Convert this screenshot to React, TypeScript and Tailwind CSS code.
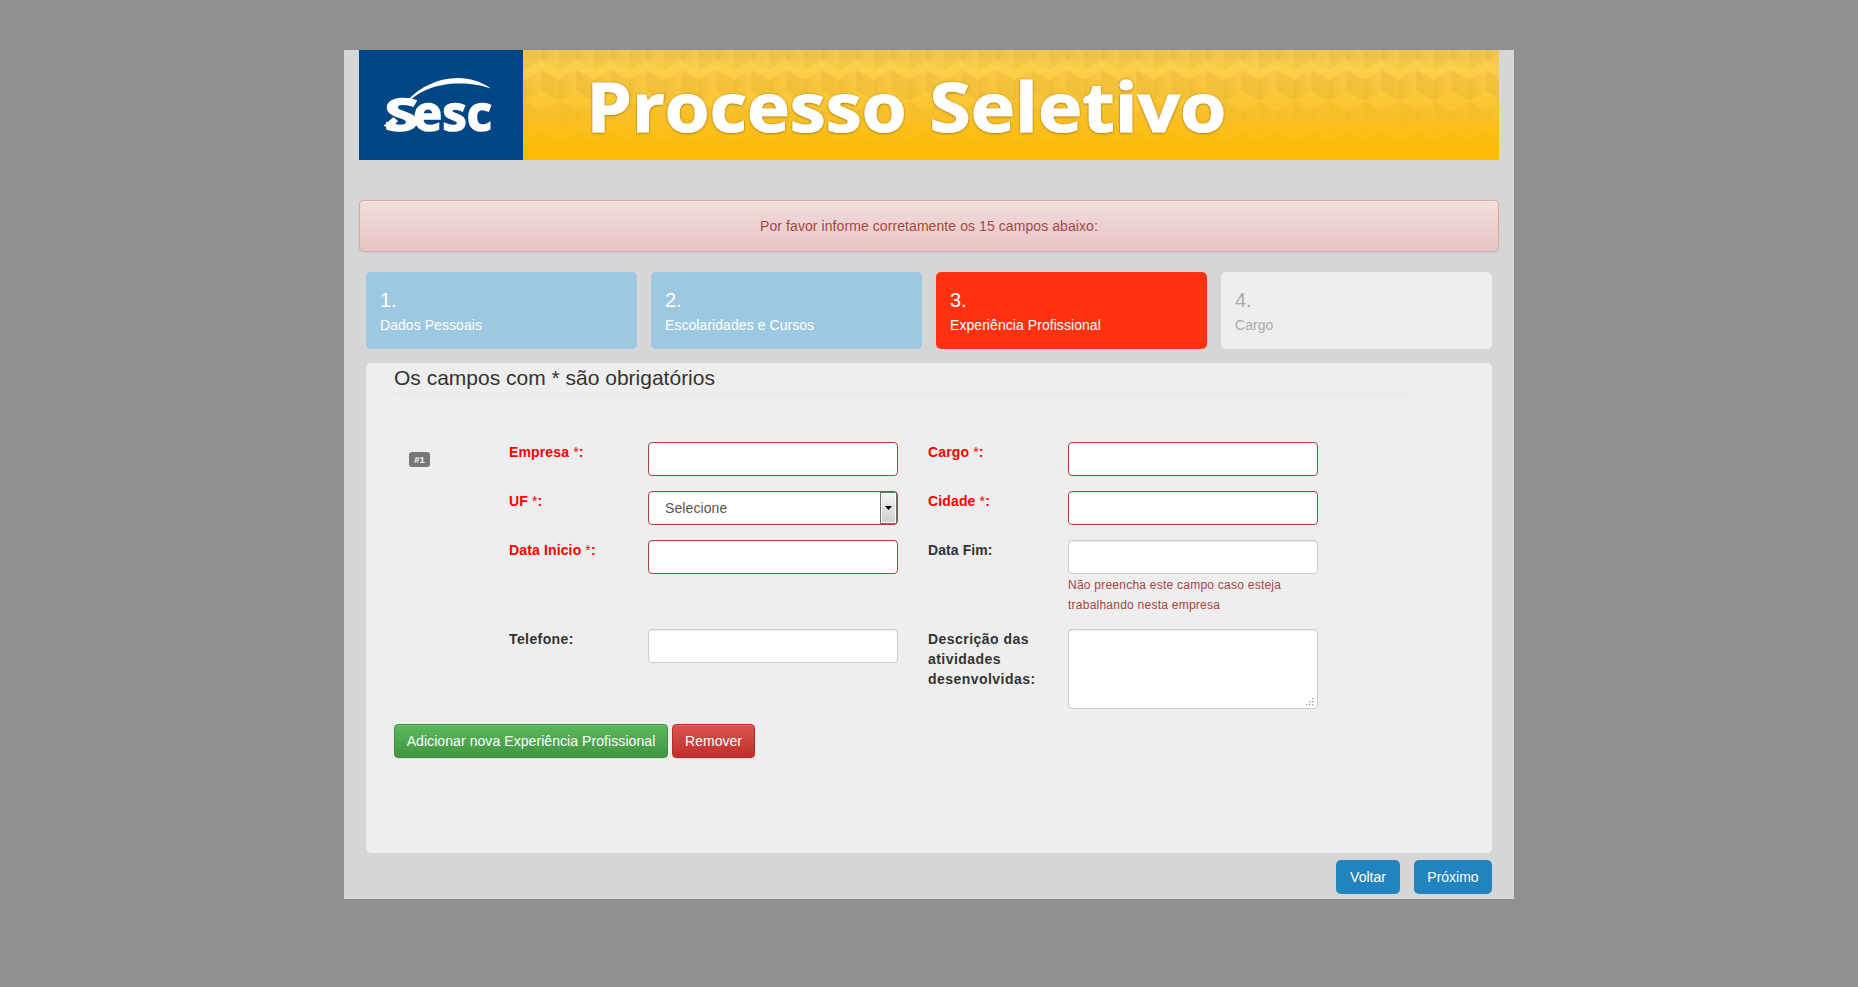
import React from "react";

function Banner() {
  return (
    <header className="h-[110px] shrink-0">
      <svg width="1140" height="110" viewBox="359 50 1140 110" className="block">
        <defs>
          <linearGradient id="gold" x1="0" y1="0" x2="0" y2="1">
            <stop offset="0" stopColor="#f8cc55" />
            <stop offset="0.2" stopColor="#fdce4a" />
            <stop offset="0.6" stopColor="#fcc328" />
            <stop offset="0.9" stopColor="#fcbb07" />
            <stop offset="1" stopColor="#fdba00" />
          </linearGradient>
          <linearGradient id="fadeDown" x1="0" y1="0" x2="0" y2="1">
            <stop offset="0" stopColor="#fff" stopOpacity="0.75" />
            <stop offset="0.4" stopColor="#fff" stopOpacity="0.65" />
            <stop offset="0.65" stopColor="#fff" stopOpacity="0.3" />
            <stop offset="0.9" stopColor="#fff" stopOpacity="0" />
          </linearGradient>
          <linearGradient id="faceLeft" x1="0" y1="0" x2="1" y2="0">
            <stop offset="0" stopColor="#cfa02a" stopOpacity="0.38" />
            <stop offset="1" stopColor="#cfa02a" stopOpacity="0.26" />
          </linearGradient>
          <linearGradient id="faceRight" x1="0" y1="0" x2="1" y2="0">
            <stop offset="0" stopColor="#cfa02a" stopOpacity="0.5" />
            <stop offset="0.35" stopColor="#cfa02a" stopOpacity="0.24" />
            <stop offset="1" stopColor="#cfa02a" stopOpacity="0.1" />
          </linearGradient>
          <pattern id="cubes" patternUnits="userSpaceOnUse" x="541.500" y="60" width="35" height="62">
            <path d="M0 10 17.5 20V41L0 31Z" fill="url(#faceLeft)" />
            <path d="M17.5 20 35 10V31L17.5 41Z" fill="url(#faceRight)" />
            <path d="M17.5 41 35 51V62H17.5Z" fill="url(#faceLeft)" />
            <path d="M0 51 17.5 41V62H0Z" fill="url(#faceRight)" />
            <path d="M17.5 0V10L0 0Z" fill="url(#faceRight)" opacity="0.6" />
            <path d="M17.5 0H35L17.5 10Z" fill="url(#faceLeft)" opacity="0.6" />
          </pattern>
          <mask id="cubeMask">
            <rect x="523" y="50" width="976" height="110" fill="url(#fadeDown)" />
          </mask>
          <filter id="titleShadow" x="-5%" y="-20%" width="110%" height="140%">
            <feDropShadow dx="0" dy="0.5" stdDeviation="1.3" floodColor="#7a5600" floodOpacity="0.85" />
          </filter>
        </defs>
        <rect x="523" y="50" width="976" height="110" fill="url(#gold)" />
        <rect x="523" y="50" width="976" height="110" fill="url(#cubes)" mask="url(#cubeMask)" />
        <rect x="359" y="50" width="164" height="110" fill="#004684" />
        <path d="M406 105C417 91 437 83.500 459 83.500C472 83.500 482 85.500 491 88.500C481 81.500 470 78 458 78C438 78 420 87 408 100L404 104Z" fill="#fff" />
        <path d="M383.500 125.800 393.500 117 398 121 391 129Z" fill="#fff" />
        <text fontFamily="'Open Sans', sans-serif" fontWeight="700" fill="#fff" stroke="#fff" strokeWidth="1.500">
          <tspan x="384.500" y="131" fontSize="45" textLength="34" lengthAdjust="spacingAndGlyphs">S</tspan>
          <tspan x="413" y="130.500" fontSize="51" textLength="79" lengthAdjust="spacingAndGlyphs">esc</tspan>
        </text>
        <g
          filter="url(#titleShadow)"
          fill="#fff"
          stroke="#fff"
          strokeWidth="1"
          fontFamily="'Open Sans', sans-serif"
          fontWeight="700"
          fontSize="69"
        >
          <text x="586.500" y="132" textLength="320" lengthAdjust="spacingAndGlyphs" fontSize="68">Processo</text>
          <text x="929.500" y="132" textLength="297" lengthAdjust="spacingAndGlyphs" fontSize="68">Seletivo</text>
        </g>
      </svg>
    </header>
  );
}

const STEPS = [
  { n: "1.", title: "Dados Pessoais", style: "bg-[#9dc8e2] text-white" },
  { n: "2.", title: "Escolaridades e Cursos", style: "bg-[#9dc8e2] text-white" },
  { n: "3.", title: "Experiência Profissional", style: "bg-[#ff3111] text-white" },
  { n: "4.", title: "Cargo", style: "bg-[#eeeeee] text-[#aaaaaa]" },
];

const control =
  "block w-[250px] rounded-[4px] border bg-white shadow-[inset_0_1px_1px_rgba(0,0,0,0.075)] outline-none";

function Label({ text, required = false, spacing = "" }: { text: string; required?: boolean; spacing?: string }) {
  return (
    <label className={required ? "font-bold tracking-[0.14px] text-[#ff0000]" : `font-bold text-[#333333] ${spacing}`}>
      {text}
      {required && <span className="font-normal"> *</span>}:
    </label>
  );
}

function Input({ error = false }: { error?: boolean }) {
  return <input type="text" className={`${control} h-[34px] ${error ? "border-[#a94442]" : "border-[#cccccc]"}`} />;
}

function Select() {
  return (
    <div className={`${control} flex h-[34px] justify-between border-[#a94442] pl-4 text-[#555555]`}>
      <span className="leading-8 tracking-[0.1px]">Selecione</span>
      <span className="flex w-[17px] items-center justify-center border border-[#707070] bg-linear-to-b from-[#f4f4f4] to-[#cfcfcf] shadow-[inset_0_0_0_1px_#fcfcfc]">
        <svg width="7" height="4" viewBox="0 0 7 4">
          <path d="M0 0H7L3.500 4Z" fill="#000" />
        </svg>
      </span>
    </div>
  );
}

const GRIP = [[6, 0], [3, 3], [6, 3], [0, 6], [3, 6], [6, 6]];

export default function App() {
  return (
    <div className="flex h-[987px] justify-center bg-[#909090] pt-[50px] font-['Liberation_Sans',Arial,sans-serif] text-sm leading-5 text-[#333333]">
      <main className="flex h-[849px] w-[1170px] flex-col bg-[#d6d6d6] px-[15px]">
        <Banner />
        <div className="mt-10 flex h-[52px] shrink-0 items-center justify-center rounded-[4px] border border-[#dca7a7] bg-linear-to-b from-[#f2dede] to-[#e7c3c3] tracking-[0.08px] text-[#a94442] shadow-[inset_0_1px_0_rgba(255,255,255,0.25),0_1px_2px_rgba(0,0,0,0.05)] [text-shadow:0_1px_0_rgba(255,255,255,0.2)]">
          Por favor informe corretamente os 15 campos abaixo:
        </div>
        <ol className="mx-[7px] mt-5 grid shrink-0 grid-cols-4 gap-[14px]">
          {STEPS.map((s) => (
            <li key={s.n} className={`h-[77px] rounded-[5px] px-[14px] pt-[17px] ${s.style}`}>
              <div className="text-xl leading-[22px]">{s.n}</div>
              <div className="pt-[4px] tracking-[0.06px]">{s.title}</div>
            </li>
          ))}
        </ol>
        <section className="mx-[7px] mt-[14px] h-[490px] shrink-0 rounded-[5px] bg-[#eeeeee] px-7">
          <h1 className="h-[31px] w-[1015px] border-b border-[#e5e5e5] text-[21px] leading-[30px]">
            Os campos com * são obrigatórios
          </h1>
          <div className="mt-12 flex pl-[15px]">
            <div className="w-[100px] pt-[10px]">
              <span className="flex h-[15px] w-[21px] items-center justify-center rounded-[3px] bg-[#777777] text-[9.500px] font-bold text-white">
                #1
              </span>
            </div>
            <div className="grid grid-cols-[139px_280px_140px_250px] gap-y-[15px]">
              <Label text="Empresa" required />
              <Input error />
              <Label text="Cargo" required />
              <Input error />
              <Label text="UF" required />
              <Select />
              <Label text="Cidade" required />
              <Input error />
              <Label text="Data Inicio" required />
              <Input error />
              <Label text="Data Fim" spacing="tracking-[0.08px]" />
              <div>
                <Input />
                <p className="pt-px text-xs leading-5 tracking-[0.24px] text-[#a94442] -mb-px">
                  Não preencha este campo caso esteja
                  <br />
                  trabalhando nesta empresa
                </p>
              </div>
              <Label text="Telefone" spacing="tracking-[0.4px]" />
              <Input />
              <Label text="Descrição das atividades desenvolvidas" spacing="tracking-[0.46px]" />
              <div className={`${control} flex h-[80px] items-end justify-end border-[#cccccc] pr-[3px] pb-[2px]`}>
                <svg width="8" height="8" viewBox="0 0 8 8" fill="#aaa">
                  {GRIP.map(([x, y]) => (
                    <rect key={`${x}-${y}`} x={x} y={y} width="1.500" height="1.500" />
                  ))}
                </svg>
              </div>
            </div>
          </div>
          <div className="mt-[15px] flex gap-1 text-white [text-shadow:0_-1px_0_rgba(0,0,0,0.2)]">
            <button className="h-[34px] w-[274px] rounded-[4px] border border-[#3e8f3e] bg-linear-to-b from-[#5cb85c] to-[#419641] tracking-[0.07px] whitespace-nowrap shadow-[inset_0_1px_0_rgba(255,255,255,0.15),0_1px_1px_rgba(0,0,0,0.075)]">
              Adicionar nova Experiência Profissional
            </button>
            <button className="h-[34px] w-[83px] rounded-[4px] border border-[#b92c28] bg-linear-to-b from-[#d9534f] to-[#c12e2a] shadow-[inset_0_1px_0_rgba(255,255,255,0.15),0_1px_1px_rgba(0,0,0,0.075)]">
              Remover
            </button>
          </div>
        </section>
        <nav className="mx-[7px] mt-[7px] flex justify-end gap-[14px] text-white">
          <button className="h-[34px] w-16 rounded-[5px] bg-[#2184be]">Voltar</button>
          <button className="h-[34px] w-[78px] rounded-[5px] bg-[#2184be]">Próximo</button>
        </nav>
      </main>
    </div>
  );
}
